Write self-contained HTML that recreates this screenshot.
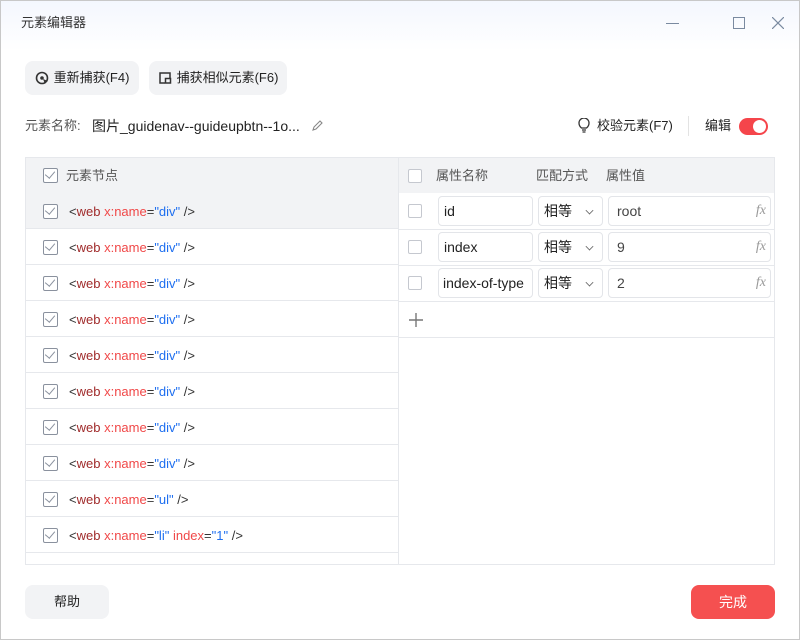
<!DOCTYPE html>
<html><head><meta charset="utf-8"><style>
*{box-sizing:border-box;margin:0;padding:0}
body{width:800px;height:640px;overflow:hidden;font-family:"Liberation Sans","Noto Sans CJK SC",sans-serif;font-size:13px;line-height:16px;color:#333;background:#fff;position:relative}
.bg{position:absolute;left:0;top:0;width:800px;height:640px;border:1px solid #c8c8c8;background:linear-gradient(#f4f7fe 0,#fff 50px,#fff 100%)}
.a{position:absolute}
.btn{position:absolute;background:#f2f3f5;border-radius:8px;font-size:13px;color:#222;display:flex;align-items:center;justify-content:center}
.cb{position:absolute;width:14px;height:14px;border:1px solid #c5c8cf;border-radius:2px;background:#fff}
.cbk{position:absolute;width:15px;height:15px;border:1.5px solid #8a919e;border-radius:2px;background:#fff}
.cbk:after{content:"";position:absolute;left:3px;top:0px;width:5px;height:8px;border-right:1.5px solid #8a919e;border-bottom:1.5px solid #8a919e;transform:rotate(40deg)}
.row{position:absolute;left:26px;width:372px;height:36px;border-bottom:1px solid #e6e8ec}
.row .cbk{left:17px;top:11px}
.row .t{position:absolute;left:43px;top:11px;font-size:13px;color:#333}
.w{color:#a02b2b}.k{color:#f04848}.v{color:#1e6ff0}
.inp{position:absolute;height:30px;border:1px solid #e3e5e9;border-radius:4px;background:#fff;font-size:14px;color:#222;padding-left:5px;display:flex;align-items:center}
.fx{position:absolute;right:4px;top:6px;color:#999;font-style:italic;font-family:"Liberation Serif",serif;font-size:14px}
.dd{position:absolute;right:9px;top:10px;width:7px;height:7px;border-right:1.3px solid #666;border-bottom:1.3px solid #666;transform:rotate(45deg) scale(.8)}
</style></head><body><div class="bg"></div>
<div class="a" style="left:21px;top:15px;font-size:13px;color:#333">元素编辑器</div>
<div class="a" style="left:666px;top:23px;width:13px;border-top:1.3px solid #7a8aa0"></div>
<div class="a" style="left:733px;top:17px;width:12px;height:12px;border:1.3px solid #7a8aa0"></div>
<svg class="a" style="left:772px;top:17px" width="12" height="12"><path d="M0 0L12 12M12 0L0 12" stroke="#7a8aa0" stroke-width="1.2"/></svg>

<div class="btn" style="left:25px;top:61px;width:114px;height:34px"><svg width="14" height="14" style="margin-right:5px"><circle cx="7" cy="7" r="5.5" fill="none" stroke="#333" stroke-width="1.6"/><circle cx="7" cy="7" r="1.8" fill="#333"/><path d="M8 8l5 2-2 1-1 2z" fill="#333"/></svg>重新捕获(F4)</div>
<div class="btn" style="left:149px;top:61px;width:138px;height:34px"><svg width="14" height="14" style="margin-right:5px"><path d="M7 12H2V2h10v5" fill="none" stroke="#333" stroke-width="1.5"/><rect x="7.5" y="7.5" width="5" height="4.5" fill="none" stroke="#333" stroke-width="1.5"/></svg>捕获相似元素(F6)</div>

<div class="a" style="left:25px;top:118px;color:#555">元素名称:</div>
<div class="a" style="left:92px;top:118px;color:#222;font-size:14px">图片_guidenav--guideupbtn--1o...</div>
<svg class="a" style="left:311px;top:120px" width="12" height="12"><path d="M2 10l1-3 6-6 2 2-6 6z" fill="none" stroke="#888" stroke-width="1.1"/></svg>
<svg class="a" style="left:578px;top:118px" width="12" height="16"><path d="M3.5 10C1 8 1 6 1 5a5 5 0 0110 0c0 1 0 3-2.5 5z" fill="none" stroke="#333" stroke-width="1.3"/><path d="M4 12h4M4.5 14h3" stroke="#333" stroke-width="1.3"/></svg>
<div class="a" style="left:597px;top:118px;color:#222">校验元素(F7)</div>
<div class="a" style="left:688px;top:116px;height:20px;border-left:1px solid #e3e3e3"></div>
<div class="a" style="left:705px;top:118px;color:#222">编辑</div>
<div class="a" style="left:739px;top:118px;width:29px;height:17px;border-radius:9px;background:#f5454b"><div class="a" style="right:2px;top:2px;width:13px;height:13px;border-radius:50%;background:#fff"></div></div>

<div class="a" style="left:25px;top:157px;width:750px;height:408px;border:1px solid #e6e8ec"></div>
<div class="a" style="left:26px;top:158px;width:748px;height:35px;background:#f2f3f5"></div>
<div class="a" style="left:26px;top:193px;width:372px;height:36px;background:#f2f3f5"></div>
<div class="a" style="left:398px;top:158px;height:406px;border-left:1px solid #e6e8ec"></div>
<div class="cbk" style="left:43px;top:168px"></div>
<div class="a" style="left:66px;top:168px;color:#555">元素节点</div>
<div class="cb" style="left:408px;top:169px"></div>
<div class="a" style="left:436px;top:168px;color:#555">属性名称</div>
<div class="a" style="left:536px;top:168px;color:#555">匹配方式</div>
<div class="a" style="left:606px;top:168px;color:#555">属性值</div>

<div class="row" style="top:193px"><div class="cbk"></div><div class="t">&lt;<span class="w">web</span> <span class="k">x:name</span>=<span class="v">"div"</span> /&gt;</div></div>
<div class="row" style="top:229px"><div class="cbk"></div><div class="t">&lt;<span class="w">web</span> <span class="k">x:name</span>=<span class="v">"div"</span> /&gt;</div></div>
<div class="row" style="top:265px"><div class="cbk"></div><div class="t">&lt;<span class="w">web</span> <span class="k">x:name</span>=<span class="v">"div"</span> /&gt;</div></div>
<div class="row" style="top:301px"><div class="cbk"></div><div class="t">&lt;<span class="w">web</span> <span class="k">x:name</span>=<span class="v">"div"</span> /&gt;</div></div>
<div class="row" style="top:337px"><div class="cbk"></div><div class="t">&lt;<span class="w">web</span> <span class="k">x:name</span>=<span class="v">"div"</span> /&gt;</div></div>
<div class="row" style="top:373px"><div class="cbk"></div><div class="t">&lt;<span class="w">web</span> <span class="k">x:name</span>=<span class="v">"div"</span> /&gt;</div></div>
<div class="row" style="top:409px"><div class="cbk"></div><div class="t">&lt;<span class="w">web</span> <span class="k">x:name</span>=<span class="v">"div"</span> /&gt;</div></div>
<div class="row" style="top:445px"><div class="cbk"></div><div class="t">&lt;<span class="w">web</span> <span class="k">x:name</span>=<span class="v">"div"</span> /&gt;</div></div>
<div class="row" style="top:481px"><div class="cbk"></div><div class="t">&lt;<span class="w">web</span> <span class="k">x:name</span>=<span class="v">"ul"</span> /&gt;</div></div>
<div class="row" style="top:517px"><div class="cbk"></div><div class="t">&lt;<span class="w">web</span> <span class="k">x:name</span>=<span class="v">"li"</span> <span class="k">index</span>=<span class="v">"1"</span> /&gt;</div></div>

<div class="a" style="left:399px;top:229px;width:375px;border-top:1px solid #e6e8ec"></div>
<div class="a" style="left:399px;top:265px;width:375px;border-top:1px solid #e6e8ec"></div>
<div class="a" style="left:399px;top:301px;width:375px;border-top:1px solid #e6e8ec"></div>
<div class="a" style="left:399px;top:337px;width:375px;border-top:1px solid #e6e8ec"></div>

<div class="cb" style="left:408px;top:204px"></div>
<div class="inp" style="left:438px;top:196px;width:95px">id</div>
<div class="inp" style="left:538px;top:196px;width:65px">相等<div class="dd"></div></div>
<div class="inp" style="left:608px;top:196px;width:163px;padding-left:8px;color:#444">root<span class="fx">fx</span></div>

<div class="cb" style="left:408px;top:240px"></div>
<div class="inp" style="left:438px;top:232px;width:95px">index</div>
<div class="inp" style="left:538px;top:232px;width:65px">相等<div class="dd"></div></div>
<div class="inp" style="left:608px;top:232px;width:163px;padding-left:8px;color:#444">9<span class="fx">fx</span></div>

<div class="cb" style="left:408px;top:276px"></div>
<div class="inp" style="left:438px;top:268px;width:95px;padding-left:4px">index-of-type</div>
<div class="inp" style="left:538px;top:268px;width:65px">相等<div class="dd"></div></div>
<div class="inp" style="left:608px;top:268px;width:163px;padding-left:8px;color:#444">2<span class="fx">fx</span></div>

<svg class="a" style="left:408px;top:312px" width="16" height="16"><path d="M8 1v14M1 8h14" stroke="#777" stroke-width="1.4"/></svg>

<div class="btn" style="left:25px;top:585px;width:84px;height:34px;color:#222">帮助</div>
<div class="btn" style="left:691px;top:585px;width:84px;height:34px;background:#f55050;color:#fff;font-size:14px">完成</div>
</body></html>
